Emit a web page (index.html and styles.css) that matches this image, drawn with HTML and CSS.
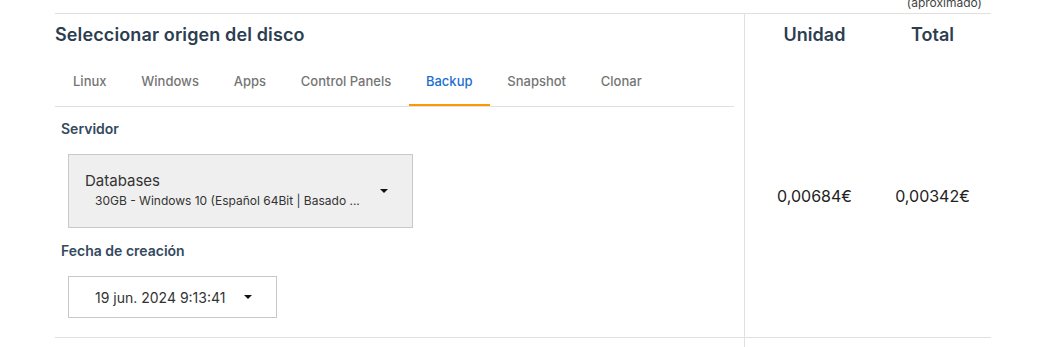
FILE: index.html
```html
<!DOCTYPE html>
<html lang="es">
<head>
  <meta charset="UTF-8">
  <meta name="viewport" content="width=device-width, initial-scale=1.0">
  <title>Seleccionar origen del disco</title>
  <link rel="stylesheet" href="styles.css">
</head>
<body>
  <div class="price-table">
    <div class="prev-row">
      <span class="approx">(aproximado)</span>
    </div>
    <div class="disk-row">
      <div class="origin-cell">
        <h2 class="section-title">Seleccionar origen del disco</h2>
        <div class="tabs">
          <button class="tab">Linux</button>
          <button class="tab">Windows</button>
          <button class="tab">Apps</button>
          <button class="tab">Control Panels</button>
          <button class="tab active">Backup</button>
          <button class="tab">Snapshot</button>
          <button class="tab">Clonar</button>
        </div>
        <div class="field-label">Servidor</div>
        <div class="select server-select">
          <div class="select-text">
            <div class="server-name">Databases</div>
            <div class="server-desc">30GB - Windows 10 (Español 64Bit | Basado ...</div>
          </div>
          <span class="caret"></span>
        </div>
        <div class="field-label">Fecha de creación</div>
        <div class="select date-select">
          <span class="date-text">19 jun. 2024 9:13:41</span>
          <span class="caret"></span>
        </div>
      </div>
      <div class="price-cell unit-cell">
        <div class="price-head">Unidad</div>
        <div class="price-value">0,00684€</div>
      </div>
      <div class="price-cell total-cell">
        <div class="price-head">Total</div>
        <div class="price-value">0,00342€</div>
      </div>
    </div>
    <div class="next-row">
      <div class="next-left"></div>
      <div class="next-right"></div>
    </div>
  </div>
</body>
</html>
```

FILE: styles.css
```css
* { margin: 0; padding: 0; box-sizing: border-box; }
body {
  font-family: Inter, 'Noto Sans', Arial, sans-serif;
  background-color: #fff;
  color: #222;
  overflow: hidden;
}
.price-table {
  margin-left: 55px;
  width: 936px;
}
.prev-row {
  height: 13px;
  display: flex;
  justify-content: flex-end;
  align-items: flex-end;
  padding: 0 9px 3px 0;
  overflow: hidden;
}
.approx {
  font-size: 12px;
  line-height: 14px;
  color: #444;
}
.disk-row {
  display: grid;
  grid-template-columns: 690px 139px 107px;
  border-top: 1px solid #e0e0e0;
  border-bottom: 1px solid #e0e0e0;
}
.origin-cell {
  padding: 9px 10px 19px 0;
  border-right: 1px solid #e0e0e0;
}
.section-title {
  font-size: 18px;
  line-height: 24px;
  font-weight: 600;
  letter-spacing: 0.12px;
  color: #2c3e50;
}
.tabs {
  display: flex;
  margin-top: 10px;
  border-bottom: 1px solid #e0e0e0;
}
.tab {
  font-family: inherit;
  background: none;
  border: none;
  border-bottom: 2px solid transparent;
  height: 49px;
  padding: 0 17.4px;
  font-size: 13px;
  font-weight: 500;
  color: #757575;
  cursor: pointer;
}
.tab:first-child { padding-left: 18px; }
.tab.active {
  color: #1c6fcf;
  border-bottom-color: #ff9800;
}
.field-label {
  margin: 12px 0 15px 6px;
  font-size: 14px;
  line-height: 20px;
  font-weight: 600;
  color: #34495e;
}
.select {
  display: flex;
  align-items: center;
  margin-left: 13px;
  border: 1px solid #c8c8c8;
}
.server-select {
  width: 345px;
  height: 74px;
  padding: 0 24px 0 16px;
  background-color: #efefef;
  margin-bottom: 13px;
}
.select-text { flex: 1; }
.server-name {
  font-size: 15px;
  line-height: 20px;
  color: #333;
}
.server-desc {
  padding-left: 10px;
  font-size: 12px;
  line-height: 20px;
  color: #333;
}
.date-select {
  width: 209px;
  height: 42px;
  padding-left: 26px;
  background-color: #fff;
}
.date-text {
  font-size: 14px;
  color: #333;
  white-space: nowrap;
  margin-right: 19px;
}
.caret {
  flex-shrink: 0;
  width: 0;
  height: 0;
  border-left: 4px solid transparent;
  border-right: 4px solid transparent;
  border-top: 4px solid #111;
}
.price-cell {
  display: flex;
  flex-direction: column;
  text-align: center;
}
.total-cell { padding-right: 10px; }
.price-head {
  padding: 9px 0 8px;
  font-size: 18px;
  line-height: 24px;
  font-weight: 600;
  color: #2c3e50;
}
.price-value {
  flex: 1;
  display: flex;
  align-items: center;
  justify-content: center;
  font-size: 16px;
  color: #222;
}
.next-row {
  display: grid;
  grid-template-columns: 690px 246px;
  height: 20px;
}
.next-left { border-right: 1px solid #e0e0e0; }
```
